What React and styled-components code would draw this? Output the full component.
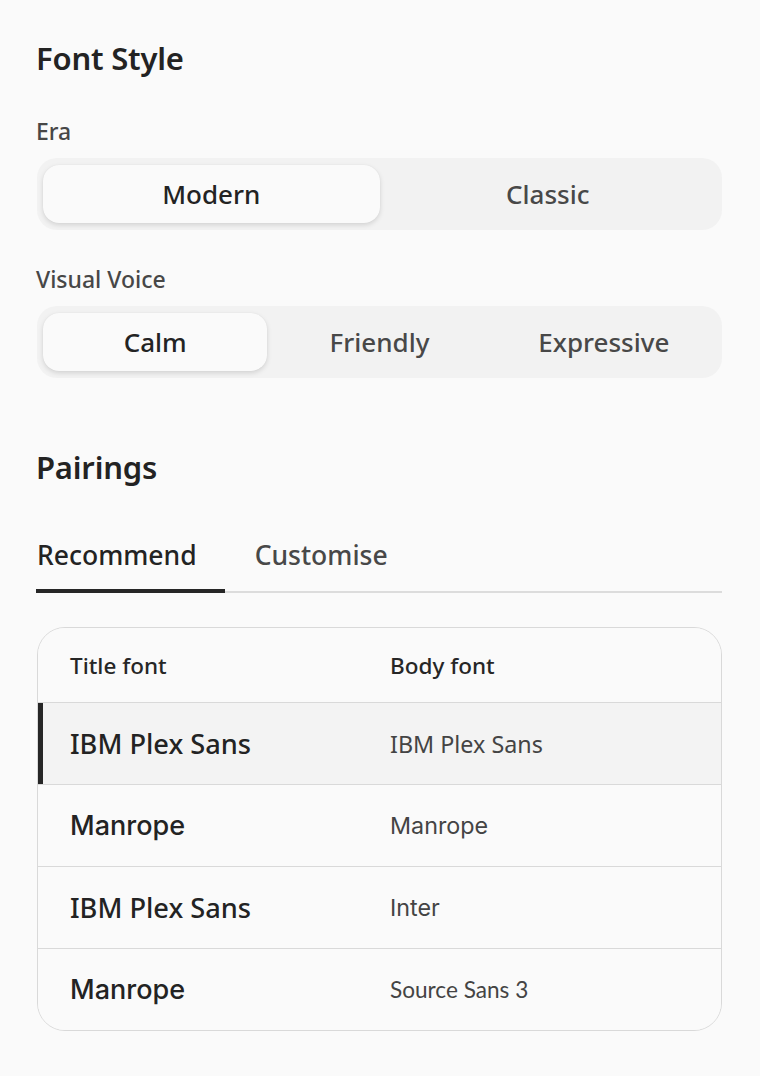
import React from "react";
import styled, { createGlobalStyle } from "styled-components";

const Global = createGlobalStyle`
  html, body { margin: 0; padding: 0; background: #fafafa; }
  body { font-family: "Noto Sans", "Open Sans", sans-serif; color: #232323; }
  * { box-sizing: border-box; }
`;

const Page = styled.div`
  width: 760px;
  min-height: 1076px;
  background: #fafafa;
  padding: 36px 38px 40px 36px;
  display: flex;
  flex-direction: column;
`;

const SectionTitle = styled.h2`
  margin: 0;
  font-size: 31px;
  line-height: 44px;
  font-weight: 600;
  color: #232323;
  letter-spacing: -0.2px;
  margin-top: ${(p) => p.$top || 0}px;
`;

const Label = styled.div`
  font-size: 23px;
  line-height: 30px;
  font-weight: 500;
  color: #474747;
  margin-top: ${(p) => p.$top || 0}px;
  margin-bottom: 12px;
`;

const Segmented = styled.div`
  display: grid;
  grid-template-columns: repeat(${(p) => p.$count}, 1fr);
  background: #f2f2f2;
  border-radius: 20px;
  padding: 7px 6px;
  height: 72px;
  margin-left: 1px;
`;

const SegButton = styled.button`
  border: none;
  font-family: inherit;
  font-size: 26px;
  font-weight: 500;
  border-radius: 16px;
  cursor: pointer;
  background: ${(p) => (p.$active ? "#fafafa" : "transparent")};
  color: ${(p) => (p.$active ? "#232323" : "#484848")};
  box-shadow: ${(p) =>
    p.$active ? "0 2px 5px rgba(0,0,0,0.13), 0 0 1px rgba(0,0,0,0.08)" : "none"};
`;

const Tabs = styled.div`
  display: flex;
  gap: 29px;
  margin-top: 48px;
  border-bottom: 2px solid #dcdcdc;
`;

const Tab = styled.div`
  font-size: 26.5px;
  font-weight: 500;
  line-height: 36px;
  padding: 0 28px 16px 1px;
  color: ${(p) => (p.$active ? "#232323" : "#484848")};
  margin-bottom: -2px;
  border-bottom: 4px solid ${(p) => (p.$active ? "#262626" : "transparent")};
`;

const Table = styled.div`
  margin-top: 34px;
  margin-left: 1px;
  border: 1.5px solid #d9d9d9;
  border-radius: 28px;
  overflow: hidden;
  background: #fafafa;
`;

const Row = styled.div`
  display: grid;
  grid-template-columns: 320px 1fr;
  align-items: center;
  height: ${(p) => (p.$header ? 74 : 82)}px;
  border-top: ${(p) => (p.$first ? "none" : "1.5px solid #d9d9d9")};
  background: ${(p) => (p.$selected ? "#f3f3f3" : "#fafafa")};
  box-shadow: ${(p) => (p.$selected ? "inset 5px 0 0 #262626" : "none")};
`;

const HeadCell = styled.div`
  padding-left: 32px;
  font-size: 22.5px;
  font-weight: 500;
  color: #262626;
`;

const TitleCell = styled.div`
  padding-left: 32px;
  font-size: ${(p) => p.$size}px;
  font-weight: ${(p) => p.$weight};
  font-family: ${(p) => p.$font};
  color: #232323;
`;

const BodyCell = styled.div`
  padding-left: 32px;
  font-size: ${(p) => p.$size}px;
  font-family: ${(p) => p.$font};
  color: #444;
  font-weight: 400;
`;

const plex = `"Noto Sans", sans-serif`;
const manrope = `"Inter", sans-serif`;
const inter = `"Inter", sans-serif`;
const source = `"Lato", sans-serif`;

const pairs = [
  { title: "IBM Plex Sans", tf: plex, tw: 500, ts: 27.2, body: "IBM Plex Sans", bf: plex, bs: 23.3 },
  { title: "Manrope", tf: manrope, tw: 500, ts: 27, body: "Manrope", bf: manrope, bs: 23.3 },
  { title: "IBM Plex Sans", tf: plex, tw: 500, ts: 27.2, body: "Inter", bf: inter, bs: 23.3 },
  { title: "Manrope", tf: manrope, tw: 500, ts: 27, body: "Source Sans 3", bf: source, bs: 22.6 },
];

export default function App() {
  return (
    <>
      <Global />
      <Page>
        <SectionTitle>Font Style</SectionTitle>
        <Label $top={36}>Era</Label>
        <Segmented $count={2}>
          <SegButton $active>Modern</SegButton>
          <SegButton>Classic</SegButton>
        </Segmented>
        <Label $top={34}>Visual Voice</Label>
        <Segmented $count={3}>
          <SegButton $active>Calm</SegButton>
          <SegButton>Friendly</SegButton>
          <SegButton>Expressive</SegButton>
        </Segmented>
        <SectionTitle $top={67}>Pairings</SectionTitle>
        <Tabs>
          <Tab $active>Recommend</Tab>
          <Tab>Customise</Tab>
        </Tabs>
        <Table>
          <Row $header $first>
            <HeadCell>Title font</HeadCell>
            <HeadCell>Body font</HeadCell>
          </Row>
          {pairs.map((p, i) => (
            <Row key={i} $selected={i === 0}>
              <TitleCell $font={p.tf} $weight={p.tw} $size={p.ts}>
                {p.title}
              </TitleCell>
              <BodyCell $font={p.bf} $size={p.bs}>
                {p.body}
              </BodyCell>
            </Row>
          ))}
        </Table>
      </Page>
    </>
  );
}
